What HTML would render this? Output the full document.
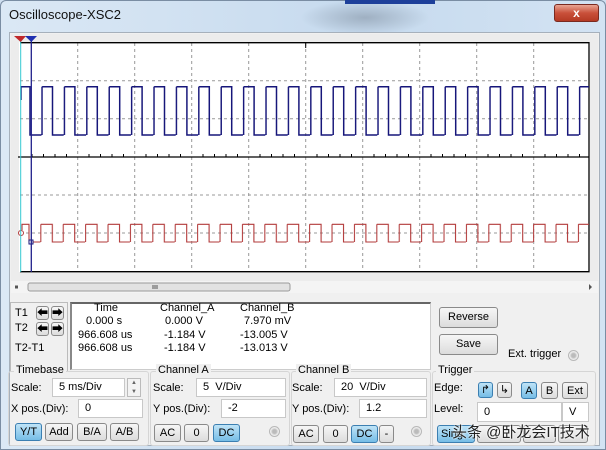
<!DOCTYPE html>
<html><head><meta charset="utf-8"><style>
*{margin:0;padding:0;box-sizing:border-box}
body{width:606px;height:450px;overflow:hidden;background:#cfdff0;font-family:"Liberation Sans","Noto Sans CJK SC",sans-serif;font-size:11px;color:#000;position:relative}
.a{position:absolute}
.t{position:absolute;white-space:nowrap;font-size:11px}
.btn{position:absolute;border:1px solid #8a8a8a;border-radius:3px;background:linear-gradient(#f6f6f6,#dcdcdc);text-align:center;font-size:11px;line-height:16px}
.on{background:linear-gradient(#bfe3f7,#76bde6);border-color:#3c7fb1}
.inp{position:absolute;background:#fff;border:1px solid #c8c8c8;font-size:11px;padding-left:6px}
.grp{position:absolute;border:1px solid #d5d5d5;border-radius:3px}
.rad{position:absolute;width:11px;height:11px;border-radius:50%;border:1px solid #b8b8b8;background:radial-gradient(#bbb 30%,#eee 60%)}
</style></head><body>
<div class="a" style="left:0;top:0;width:606px;height:450px;background:linear-gradient(90deg,#dbe8f5,#c6daee 60%,#d3e3f3);border:1px solid #7a8da3;border-radius:6px 6px 0 0"></div>
<div class="a" style="left:300px;top:0;width:130px;height:35px;background:radial-gradient(ellipse at center,#9fb0c2 0%,rgba(200,218,238,0) 70%)"></div>
<div class="a" style="left:345px;top:0;width:90px;height:4px;background:#1d3f9a"></div>
<div class="t" style="left:9px;top:7px;font-size:13px;color:#111">Oscilloscope-XSC2</div>
<div class="a" style="left:554px;top:4px;width:45px;height:18px;border-radius:3px;border:1px solid #7a2a20;background:linear-gradient(#e9a593,#c9503a 50%,#b43a24);color:#fff;font-weight:bold;text-align:center;font-size:12px;line-height:16px">x</div>
<div class="a" style="left:9px;top:32px;width:591px;height:414px;background:#f0f0f0;border:1px solid #a6b0bb"></div>
<div class="a" style="left:11px;top:34px;width:587px;height:247px;background:#ececec"></div>
<svg class="a" style="left:0;top:0" width="606" height="300">
<defs>
<pattern id="pb" patternUnits="userSpaceOnUse" x="41.3" y="0" width="22.4" height="300">
<path d="M0.7,86.7H11.2V135H22.4M0.7,86.7V135M11.2,86.7V135" fill="none" stroke="#16167a" stroke-width="1.5"/></pattern>
<pattern id="pr" patternUnits="userSpaceOnUse" x="40.3" y="0" width="22.4" height="300">
<path d="M0.5,224.3H12V242H22.4M0.5,224.3V242M12,224.3V242" fill="none" stroke="#b23a3a" stroke-width="1.1"/></pattern>
</defs>
<rect x="19" y="42" width="571" height="230" fill="#fff"/>
<g stroke="#999" stroke-dasharray="3,3" stroke-width="1">
<path d="M77.7,43V271M134.7,43V271M191.7,43V271M248.7,43V271M305.7,43V271M362.7,43V271M419.7,43V271M476.7,43V271M533.7,43V271"/>
<path d="M20,80.7H589M20,118.7H589M20,195H589M20,233H589"/>
</g>
<path d="M20,42.7H589V271.7H20" fill="none" stroke="#000" stroke-width="1.3"/>
<path d="M18,157H589" stroke="#000" stroke-width="1.3"/>
<path d="M305.7,42V48" stroke="#000"/>
<g stroke="#000"><path d="M32,157V154M43.5,157V154M55,157V154M66.5,157V154M89,157V154M100.5,157V154M112,157V154M123.5,157V154M146,157V154M157.5,157V154M169,157V154M180.5,157V154M203,157V154M214.5,157V154M226,157V154M237.5,157V154M260,157V154M271.5,157V154M283,157V154M294.5,157V154M317,157V154M328.5,157V154M340,157V154M351.5,157V154M374,157V154M385.5,157V154M397,157V154M408.5,157V154M431,157V154M442.5,157V154M454,157V154M465.5,157V154M488,157V154M499.5,157V154M511,157V154M522.5,157V154M545,157V154M556.5,157V154M568,157V154M579.5,157V154"/></g>
<rect x="41" y="80" width="548" height="60" fill="url(#pb)"/>
<rect x="40" y="220" width="549" height="25" fill="url(#pr)"/>
<path d="M21,100V86.7H30V135H41.3" fill="none" stroke="#16167a" stroke-width="1.5"/>
<path d="M22,230V224.3H29V242H40.3" fill="none" stroke="#b23a3a" stroke-width="1.1"/>
<circle cx="21" cy="233" r="2.5" fill="#fff" stroke="#b23a3a"/>
<rect x="29" y="240" width="4" height="4" fill="#fff" stroke="#16167a"/>
<path d="M20.7,40V272" stroke="#35c8d0" stroke-width="1"/>
<path d="M31.3,40V272" stroke="#20208a" stroke-width="1.3"/>
<path d="M14,36H26L20.7,42Z" fill="#c0282a"/>
<path d="M25,36H37L31.3,42Z" fill="#2030b0"/>
<rect x="11" y="281" width="587" height="12" fill="#f4f4f4"/>
<rect x="28" y="283" width="262" height="8" rx="2" fill="#e2e2e2" stroke="#9a9a9a"/>
<path d="M153,285V289M155,285V289M157,285V289" stroke="#555"/>
<path d="M18,287L15,287" stroke="#555" stroke-width="3"/>
<path d="M589,284L592,287L589,290Z" fill="#555"/>
</svg>
<div class="a" style="left:10px;top:302px;width:58px;height:70px;border:1px solid #bbb"></div>
<div class="t" style="left:15px;top:307px">T1</div>
<div class="t" style="left:15px;top:322px">T2</div>
<div class="t" style="left:15px;top:342px">T2-T1</div>
<div class="btn" style="left:36px;top:306px;width:13px;height:14px;line-height:12px;font-size:11px">&#x2b05;</div>
<div class="btn" style="left:51px;top:306px;width:13px;height:14px;line-height:12px;font-size:11px">&#x27a1;</div>
<div class="btn" style="left:36px;top:322px;width:13px;height:14px;line-height:12px;font-size:11px">&#x2b05;</div>
<div class="btn" style="left:51px;top:322px;width:13px;height:14px;line-height:12px;font-size:11px">&#x27a1;</div>
<div class="a" style="left:70px;top:302px;width:361px;height:68px;background:#fff;border:1px solid #ccc;border-top:2px solid #666;border-left:2px solid #888"></div>
<div class="t" style="left:94px;top:302px">Time</div>
<div class="t" style="left:86px;top:315px">0.000 s</div>
<div class="t" style="left:78px;top:329px">966.608 us</div>
<div class="t" style="left:78px;top:342px">966.608 us</div>
<div class="t" style="left:160px;top:302px">Channel_A</div>
<div class="t" style="left:165px;top:315px">0.000 V</div>
<div class="t" style="left:164px;top:329px">-1.184 V</div>
<div class="t" style="left:164px;top:342px">-1.184 V</div>
<div class="t" style="left:240px;top:302px">Channel_B</div>
<div class="t" style="left:244px;top:315px">7.970 mV</div>
<div class="t" style="left:240px;top:329px">-13.005 V</div>
<div class="t" style="left:240px;top:342px">-13.013 V</div>
<div class="btn" style="left:439px;top:307px;width:59px;height:21px;line-height:19px">Reverse</div>
<div class="btn" style="left:439px;top:334px;width:59px;height:21px;line-height:19px">Save</div>
<div class="t" style="left:508px;top:348px">Ext. trigger</div>
<div class="rad" style="left:568px;top:350px"></div>
<div class="grp" style="left:8px;top:371px;width:141px;height:75px"></div>
<div class="grp" style="left:150px;top:371px;width:140px;height:75px"></div>
<div class="grp" style="left:291px;top:371px;width:140px;height:75px"></div>
<div class="grp" style="left:432px;top:371px;width:164px;height:75px"></div>
<div class="t" style="left:14px;top:364px;background:#f0f0f0;padding:0 2px">Timebase</div>
<div class="t" style="left:156px;top:364px;background:#f0f0f0;padding:0 2px">Channel A</div>
<div class="t" style="left:296px;top:364px;background:#f0f0f0;padding:0 2px">Channel B</div>
<div class="t" style="left:436px;top:364px;background:#f0f0f0;padding:0 2px">Trigger</div>
<div class="t" style="left:11px;top:382px">Scale:</div>
<div class="inp" style="left:52px;top:378px;width:73px;height:19px;line-height:16px">5 ms/Div</div>
<div class="a" style="left:127px;top:378px;width:14px;height:19px;border:1px solid #bbb;background:#f3f3f3;font-size:6px;text-align:center;line-height:9px;color:#666">▲<br>▼</div>
<div class="t" style="left:11px;top:403px">X pos.(Div):</div>
<div class="inp" style="left:78px;top:399px;width:65px;height:19px;line-height:17px">0</div>
<div class="btn on" style="left:15px;top:423px;width:27px;height:18px">Y/T</div>
<div class="btn" style="left:45px;top:423px;width:28px;height:18px">Add</div>
<div class="btn" style="left:77px;top:423px;width:30px;height:18px">B/A</div>
<div class="btn" style="left:110px;top:423px;width:29px;height:18px">A/B</div>
<div class="t" style="left:153px;top:382px">Scale:</div>
<div class="inp" style="left:196px;top:378px;width:90px;height:19px;line-height:16px">5&nbsp; V/Div</div>
<div class="t" style="left:153px;top:403px">Y pos.(Div):</div>
<div class="inp" style="left:221px;top:399px;width:65px;height:19px;line-height:17px">-2</div>
<div class="btn" style="left:154px;top:424px;width:27px;height:18px">AC</div>
<div class="btn" style="left:184px;top:424px;width:25px;height:18px">0</div>
<div class="btn on" style="left:213px;top:424px;width:27px;height:18px">DC</div>
<div class="rad" style="left:269px;top:426px"></div>
<div class="t" style="left:292px;top:382px">Scale:</div>
<div class="inp" style="left:334px;top:378px;width:93px;height:19px;line-height:16px">20&nbsp; V/Div</div>
<div class="t" style="left:292px;top:403px">Y pos.(Div):</div>
<div class="inp" style="left:359px;top:399px;width:68px;height:19px;line-height:17px">1.2</div>
<div class="btn" style="left:293px;top:425px;width:26px;height:18px">AC</div>
<div class="btn" style="left:323px;top:425px;width:25px;height:18px">0</div>
<div class="btn on" style="left:351px;top:425px;width:27px;height:18px">DC</div>
<div class="btn" style="left:379px;top:425px;width:15px;height:18px">-</div>
<div class="rad" style="left:411px;top:426px"></div>
<div class="t" style="left:434px;top:382px">Edge:</div>
<div class="btn on" style="left:478px;top:382px;width:15px;height:16px;line-height:14px">&#x21B1;</div>
<div class="btn" style="left:497px;top:382px;width:15px;height:16px;line-height:14px">&#x21B3;</div>
<div class="btn on" style="left:521px;top:382px;width:16px;height:17px">A</div>
<div class="btn" style="left:541px;top:382px;width:17px;height:17px">B</div>
<div class="btn" style="left:562px;top:382px;width:26px;height:17px">Ext</div>
<div class="t" style="left:434px;top:403px">Level:</div>
<div class="inp" style="left:477px;top:402px;width:85px;height:20px;line-height:18px">0</div>
<div class="inp" style="left:562px;top:402px;width:27px;height:20px;line-height:18px">V</div>
<div class="btn on" style="left:437px;top:425px;width:38px;height:18px;text-align:left;padding-left:3px">Sing</div>
<div class="btn" style="left:477px;top:425px;width:44px;height:18px"></div>
<div class="btn" style="left:523px;top:425px;width:33px;height:18px"></div>
<div class="btn" style="left:558px;top:425px;width:30px;height:18px"></div>
<div class="t" style="left:452px;top:421px;font-size:15px;color:#222;text-shadow:0 0 2px #fff,0 0 2px #fff">头条 @卧龙会IT技术</div>
</body></html>
